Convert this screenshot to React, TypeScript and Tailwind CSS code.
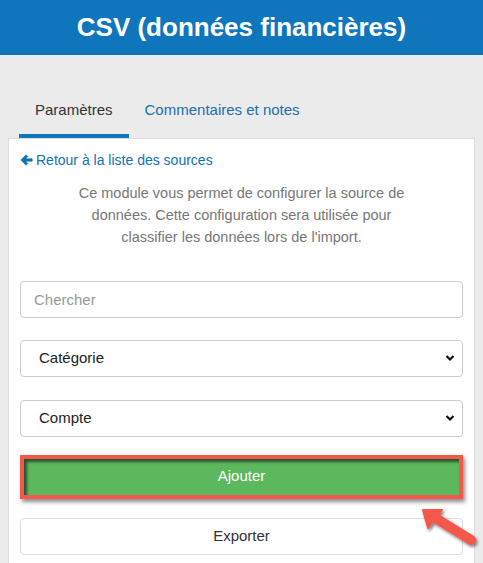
function BackArrow() {
  return (
    <svg width="13" height="12" viewBox="0 0 13 12" className="mr-[3px]">
      <path
        d="M0.8 6 L6 0.8 L7.8 2.6 L5.6 4.8 L12.2 4.8 L12.2 7.3 L5.6 7.3 L7.8 9.5 L6 11.3 Z"
        fill="#1172b8"
        stroke="#1172b8"
        strokeWidth="0.6"
        strokeLinejoin="round"
      />
    </svg>
  )
}

function Chevron() {
  return (
    <svg
      className="pointer-events-none absolute right-[8px] top-1/2 -translate-y-1/2"
      width="10"
      height="8"
      viewBox="0 0 10 8"
    >
      <path d="M1.5 2 L5 5.5 L8.5 2" fill="none" stroke="#111" strokeWidth="2.2" />
    </svg>
  )
}

function Select({ label }: { label: string }) {
  return (
    <div className="relative">
      <select className="h-[37px] w-full appearance-none rounded-[4px] border border-[#cccccc] bg-white pl-[18px] text-[15px] text-[#222]">
        <option>{label}</option>
      </select>
      <Chevron />
    </div>
  )
}

export default function App() {
  return (
    <div className="relative h-[563px] w-[483px] overflow-hidden bg-[#ebebeb] font-['Liberation_Sans',Arial,sans-serif]">
      <div className="flex h-[55px] items-center justify-center bg-[#0f76bd]">
        <h1 className="text-[26px] font-bold text-white">CSV (données financières)</h1>
      </div>

      <div className="mt-[44px] flex px-[19px]">
        <div className="border-b-4 border-[#0f76bd] px-[16px] pb-[12px] text-[15px] text-[#333]">Paramètres</div>
        <div className="px-[16px] pb-[12px] text-[15px] text-[#1a6faf]">Commentaires et notes</div>
      </div>

      <div className="mx-[8px] h-[430px] border border-[#dddddd] bg-white px-[11px]">
        <a className="mt-[11px] flex items-center text-[14px] text-[#1172b8]">
          <BackArrow />
          Retour à la liste des sources
        </a>

        <p className="mx-auto mt-[11px] max-w-[350px] text-center text-[14.5px] leading-[22px] text-[#777]">
          Ce module vous permet de configurer la source de données. Cette configuration sera utilisée pour classifier les données lors de l'import.
        </p>

        <div className="mt-[33px] flex flex-col">
          <input
            placeholder="Chercher"
            className="h-[37px] w-full rounded-[4px] border border-[#cccccc] px-[13px] text-[15px] placeholder:text-[#999]"
          />
          <div className="mt-[22px]">
            <Select label="Catégorie" />
          </div>
          <div className="mt-[23px]">
            <Select label="Compte" />
          </div>
          <button className="mt-[18px] h-[44px] w-full border-[4px] border-[#f4584b] bg-[#5cb85c] text-[15px] text-white shadow-[inset_3px_3px_3px_rgba(0,0,0,0.55),2px_3px_4px_rgba(0,0,0,0.45)]">
            Ajouter
          </button>
          <button className="mt-[19px] h-[37px] w-full rounded-[4px] border border-[#dddddd] bg-white text-[15px] text-[#333]">
            Exporter
          </button>
        </div>
      </div>

      <svg className="absolute left-[410px] top-[500px]" width="73" height="60" viewBox="0 0 73 60">
        <defs>
          <filter id="sh" x="-30%" y="-30%" width="160%" height="160%">
            <feDropShadow dx="1.5" dy="2" stdDeviation="1.5" floodColor="#000" floodOpacity="0.5" />
          </filter>
        </defs>
        <g filter="url(#sh)" fill="#f4584b" stroke="#f4584b">
          <path d="M27 19 L61 40" strokeWidth="10" strokeLinecap="round" fill="none" />
          <path d="M13 10 L32 10 L18 28 Z" strokeWidth="2" strokeLinejoin="round" />
        </g>
      </svg>
    </div>
  )
}
